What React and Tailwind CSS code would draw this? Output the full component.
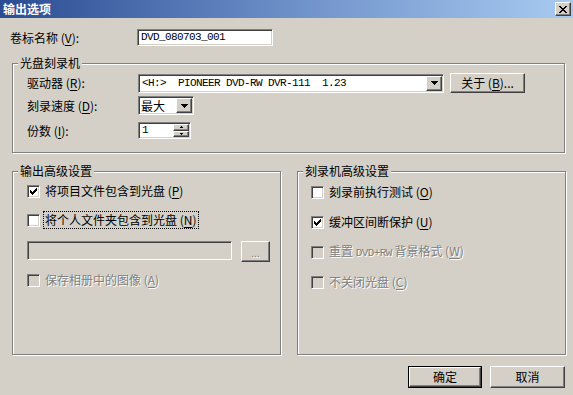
import React from "react";

const sunken =
  "border border-t-[#808080] border-l-[#808080] border-b-white border-r-white shadow-[inset_1px_1px_0_#404040,inset_-1px_-1px_0_#d4d0c8]";
const raised =
  "border border-t-white border-l-white border-b-[#404040] border-r-[#404040] shadow-[inset_-1px_-1px_0_#808080,inset_1px_1px_0_#d4d0c8]";
const cjk = "font-['Noto_Sans_CJK_SC','Noto_Sans',sans-serif]";
const mono = "font-['Liberation_Mono',monospace] text-[11px] tracking-[-0.6px]";
const disabledText = "text-[#808080] [text-shadow:1px_1px_0_#fff]";

function U({ children }) {
  return <span className="underline underline-offset-[2px]">{children}</span>;
}

function Check() {
  const px = [
    [6, 0],
    [5, 1], [6, 1],
    [0, 2], [4, 2], [5, 2], [6, 2],
    [0, 3], [1, 3], [3, 3], [4, 3], [5, 3],
    [0, 4], [1, 4], [2, 4], [3, 4], [4, 4],
    [1, 5], [2, 5], [3, 5],
    [2, 6],
  ];
  return (
    <svg width="7" height="7" viewBox="0 0 7 7" shapeRendering="crispEdges">
      {px.map(([x, y], i) => (
        <rect key={i} x={x} y={y} width="1" height="1" fill="#000" />
      ))}
    </svg>
  );
}

function Checkbox({ checked, disabled }) {
  return (
    <div
      className={`w-[13px] h-[13px] shrink-0 flex items-center justify-center ${sunken} ${
        disabled ? "bg-[#d4d0c8]" : "bg-white"
      }`}
    >
      {checked && <Check />}
    </div>
  );
}

function DownArrow() {
  return (
    <svg width="7" height="4" viewBox="0 0 7 4" shapeRendering="crispEdges">
      <path d="M0 0h7v1H0zM1 1h5v1H1zM2 2h3v1H2zM3 3h1v1H3z" fill="#000" />
    </svg>
  );
}

function ComboButton() {
  return (
    <div className={`w-[16px] h-full bg-[#d4d0c8] flex items-center justify-center ${raised}`}>
      <DownArrow />
    </div>
  );
}

function GroupBox({ title, className, children }) {
  return (
    <div
      className={`relative border border-[#808080] shadow-[inset_1px_1px_0_#fff,1px_1px_0_#fff] ${className}`}
    >
      <div className="absolute -top-[8px] left-[5px] px-[2px] bg-[#d4d0c8] leading-[14px] text-[12px]">
        {title}
      </div>
      {children}
    </div>
  );
}

function CheckRow({ checked, disabled, children, focus, className = "" }) {
  return (
    <div className={`flex items-center h-[14px] gap-[5px] ${className}`}>
      <Checkbox checked={checked} disabled={disabled} />
      <span
        className={`text-[12px] leading-[14px] whitespace-nowrap ${disabled ? disabledText : "text-black"} ${
          focus ? "outline outline-1 outline-dotted outline-black outline-offset-[1px]" : ""
        }`}
      >
        {children}
      </span>
    </div>
  );
}

export default function App() {
  return (
    <div className={`w-[573px] h-[395px] bg-[#d4d0c8] overflow-hidden text-black ${cjk} flex flex-col`}>
      {/* Title bar */}
      <div className="h-[18px] shrink-0 bg-gradient-to-r from-[#2a4c92] via-[#6d8fc8] to-[#a8cbf1] flex items-center justify-between pl-[3px] pr-[2px]">
        <span className="text-white font-bold text-[12px] leading-[16px]">输出选项</span>
        <div className={`w-[16px] h-[14px] bg-[#d4d0c8] flex items-center justify-center ${raised}`}>
          <svg width="8" height="7" viewBox="0 0 8 7" shapeRendering="crispEdges">
            <path
              d="M0 0h2v1H0zM6 0h2v1H6zM1 1h2v1H1zM5 1h2v1H5zM2 2h4v1H2zM3 3h2v1H3zM2 4h4v1H2zM1 5h2v1H1zM5 5h2v1H5zM0 6h2v1H0zM6 6h2v1H6z"
              fill="#000"
            />
          </svg>
        </div>
      </div>

      {/* Volume label */}
      <div className="mt-[11px] flex items-center h-[17px]">
        <div className="w-[137px] pl-[10px] text-[12px] leading-[14px]">
          卷标名称 (<U>V</U>):
        </div>
        <div className={`w-[136px] h-[17px] bg-white flex items-center pl-[3px] ${sunken}`}>
          <span className={`${mono} leading-[13px]`}>DVD_080703_001</span>
        </div>
      </div>

      {/* Burner group */}
      <GroupBox title="光盘刻录机" className="mt-[17px] ml-[12px] w-[553px] h-[90px] shrink-0">
        <div className="pt-[9px] pl-[14px] flex flex-col">
          <div className="flex items-center h-[20px]">
            <div className="w-[111px] text-[12px] leading-[14px]">
              驱动器 (<U>R</U>):
            </div>
            <div className={`w-[306px] h-[19px] bg-white flex items-center pl-[3px] pr-[1px] py-[1px] ${sunken}`}>
              <span className={`${mono} leading-[13px] flex-1 whitespace-pre`}>
                {"<H:>  PIONEER DVD-RW DVR-111  1.23"}
              </span>
              <ComboButton />
            </div>
            <div className={`ml-[6px] w-[75px] h-[20px] bg-[#d4d0c8] flex items-center justify-center text-[12px] leading-[14px] ${raised}`}>
              关于 (<U>B</U>)...
            </div>
          </div>
          <div className="flex items-center h-[19px] mt-[3px]">
            <div className="w-[111px] text-[12px] leading-[14px]">
              刻录速度 (<U>D</U>):
            </div>
            <div className={`w-[56px] h-[19px] bg-white flex items-center pl-[2px] pr-[1px] py-[1px] ${sunken}`}>
              <span className="flex-1 text-[12px] leading-[14px]">最大</span>
              <ComboButton />
            </div>
          </div>
          <div className="flex items-center h-[17px] mt-[7px]">
            <div className="w-[111px] text-[12px] leading-[14px]">
              份数 (<U>I</U>):
            </div>
            <div className={`w-[53px] h-[17px] bg-white flex items-center pl-[3px] pr-[1px] py-[1px] ${sunken}`}>
              <span className={`flex-1 ${mono} leading-[13px]`}>1</span>
              <div className="w-[16px] h-full flex flex-col">
                <div className={`flex-1 bg-[#d4d0c8] flex items-center justify-center ${raised}`}>
                  <svg width="3" height="2" viewBox="0 0 3 2" shapeRendering="crispEdges">
                    <path d="M1 0h1v1H1zM0 1h3v1H0z" fill="#000" />
                  </svg>
                </div>
                <div className={`flex-1 bg-[#d4d0c8] flex items-center justify-center ${raised}`}>
                  <svg width="3" height="2" viewBox="0 0 3 2" shapeRendering="crispEdges">
                    <path d="M0 0h3v1H0zM1 1h1v1H1z" fill="#000" />
                  </svg>
                </div>
              </div>
            </div>
          </div>
        </div>
      </GroupBox>

      {/* Advanced groups */}
      <div className="mt-[18px] ml-[12px] flex gap-[16px] shrink-0">
        <GroupBox title="输出高级设置" className="w-[269px] h-[184px]">
          <div className="pt-[12px] pl-[14px] flex flex-col">
            <CheckRow checked>
              将项目文件包含到光盘 (<U>P</U>)
            </CheckRow>
            <CheckRow className="mt-[15px]" focus>
              将个人文件夹包含到光盘 (<U>N</U>)
            </CheckRow>
            <div className="mt-[14px] flex items-start h-[21px] gap-[9px]">
              <div className={`w-[205px] h-[19px] bg-[#d4d0c8] ${sunken}`} />
              <div className={`w-[29px] h-[21px] bg-[#d4d0c8] flex items-end justify-center pb-[3px] text-[10px] leading-[10px] ${raised} ${disabledText}`}>
                ...
              </div>
            </div>
            <CheckRow className="mt-[11px]" disabled>
              保存相册中的图像 (<U>A</U>)
            </CheckRow>
          </div>
        </GroupBox>
        <GroupBox title="刻录机高级设置" className="w-[269px] h-[184px]">
          <div className="pt-[13px] pl-[13px] flex flex-col gap-[16px]">
            <CheckRow>
              刻录前执行测试 (<U>O</U>)
            </CheckRow>
            <CheckRow checked>
              缓冲区间断保护 (<U>U</U>)
            </CheckRow>
            <CheckRow disabled>
              重置 <span className={`${mono}`}>DVD+RW</span> 背景格式 (<U>W</U>)
            </CheckRow>
            <CheckRow disabled>
              不关闭光盘 (<U>C</U>)
            </CheckRow>
          </div>
        </GroupBox>
      </div>

      {/* Buttons */}
      <div className="mt-[11px] flex justify-end gap-[8px] pr-[8px]">
        <div className="w-[74px] h-[22px] border border-black">
          <div className={`w-full h-full bg-[#d4d0c8] flex items-center justify-center text-[12px] leading-[14px] ${raised}`}>
            确定
          </div>
        </div>
        <div className={`w-[75px] h-[22px] bg-[#d4d0c8] flex items-center justify-center text-[12px] leading-[14px] ${raised}`}>
          取消
        </div>
      </div>
    </div>
  );
}
